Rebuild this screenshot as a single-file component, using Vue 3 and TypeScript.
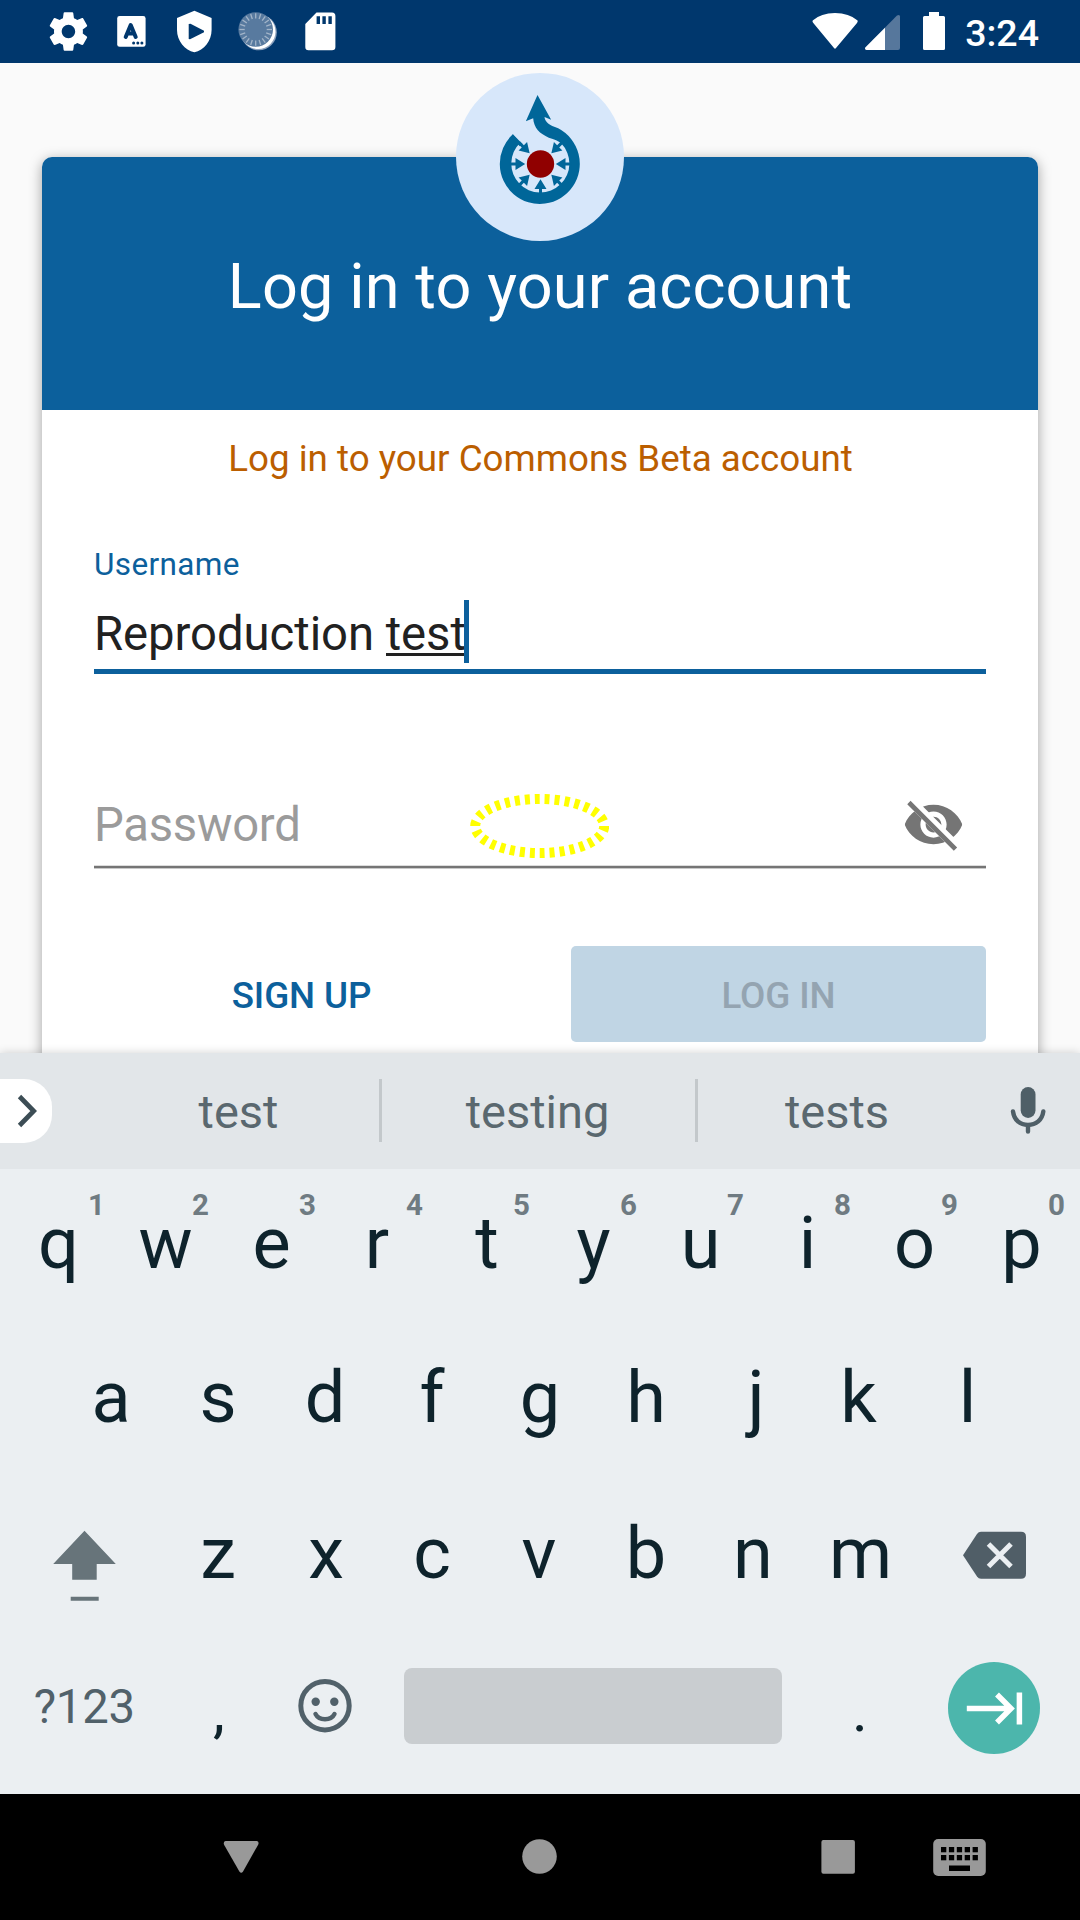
<script setup lang="ts">
import { ref } from 'vue'

interface Key {
  label: string
  hint?: string
  nudge: number
}

const username = ref({ done: 'Reproduction ', composing: 'test' })

// Optical corrections for glyphs that look off-centre on their key, in px
const nudges: Record<string, number> = { e: -1, r: -2.5, t: 0.5, j: 3, k: -1.5, x: 1, m: 0.5, g: 1, l: 0.5 }
const toKeys = (letters: string): Key[] => letters.split('').map((label) => ({ label, nudge: nudges[label] ?? 0 }))

const topRow: Key[] = toKeys('qwertyuiop').map((key, i) => ({ ...key, hint: String((i + 1) % 10) }))
const homeRow: Key[] = toKeys('asdfghjkl')
const bottomRow: Key[] = toKeys('zxcvbnm')

// Angles of the arrows that point at the centre of the Commons logo
const arrowAngles = [0, -45, -90, -135, 180, 45, 135]
const ticks = Array.from({ length: 20 }, (_, i) => i * 18)
const keyDots = [0, 1, 2, 3, 4]
</script>

<template>
  <div class="phone">
    <header class="status">
      <div class="notifications">
        <svg viewBox="0 0 63 63">
          <g transform="translate(45.5 8.4) scale(1.925) translate(-19.3 0)">
            <path fill="#fff" d="M19.43 12.98c.04-.32.07-.64.07-.98s-.03-.66-.07-.98l2.11-1.65c.19-.15.24-.42.12-.64l-2-3.46c-.12-.22-.39-.3-.61-.22l-2.49 1c-.52-.4-1.08-.73-1.69-.98l-.38-2.65C14.46 2.18 14.25 2 14 2h-4c-.25 0-.46.18-.49.42l-.38 2.65c-.61.25-1.17.59-1.69.98l-2.49-1c-.23-.09-.49 0-.61.22l-2 3.46c-.13.22-.07.49.12.64l2.11 1.65c-.04.32-.07.65-.07.98s.03.66.07.98l-2.11 1.65c-.19.15-.24.42-.12.64l2 3.46c.12.22.39.3.61.22l2.49-1c.52.4 1.08.73 1.69.98l.38 2.65c.03.24.24.42.49.42h4c.25 0 .46-.18.49-.42l.38-2.65c.61-.25 1.17-.59 1.69-.98l2.49 1c.23.09.49 0 .61-.22l2-3.46c.12-.22.07-.49-.12-.64l-2.11-1.65zM12 15.5c-1.93 0-3.5-1.57-3.5-3.5s1.57-3.5 3.5-3.5 3.5 1.57 3.5 3.5-1.57 3.5-3.5 3.5z" />
          </g>
        </svg>
        <svg viewBox="0 0 63 63">
          <rect x="17.2" y="16" width="28.4" height="30.8" rx="2.4" fill="#fff" />
          <path d="M26.3 37 L31.3 25 L36.3 37 M28 33.6 H34.6" transform="translate(-.6 0)" fill="none" stroke="#00376d" stroke-width="4" stroke-linecap="round" stroke-linejoin="round" />
          <circle cx="33.6" cy="43" r="1.5" fill="#00376d" />
          <circle cx="37.8" cy="43" r="1.5" fill="#00376d" />
          <circle cx="41.9" cy="43" r="1.5" fill="#00376d" />
        </svg>
        <svg viewBox="0 0 63 63">
          <path fill="#fff" fill-rule="evenodd" d="M31.4 10.8 L48.6 18 V30 C48.6 41 41 50 31.4 52.3 C21.8 50 14 41 14 30 V18 Z M25.7 24 V39 L27 39.2 L41 32.3 V30.7 L27.5 23.8 Z" />
        </svg>
        <svg viewBox="0 0 63 63">
          <circle cx="32.8" cy="32.3" r="18" fill="#8ba1bd" />
          <circle cx="32.2" cy="31.7" r="17.3" fill="#fff" />
          <circle cx="29.7" cy="29.5" r="17.3" fill="#587a9f" />
          <path v-for="t in ticks" :key="t" :transform="`rotate(${t} 29.7 29.5)`" d="M29.7 13.2 V18.5" stroke="#a3b5c9" stroke-width="1.3" />
        </svg>
        <svg viewBox="0 0 63 63">
          <path fill="#fff" fill-rule="evenodd" d="M27.5 12.5 H43 Q46.4 12.5 46.4 16 V47 Q46.4 50.3 43 50.3 H19.5 Q16.3 50.3 16.3 47 V24 Z M27.6 16.3 V24 H31 V16.3 Z M33.4 16.3 V24 H36.8 V16.3 Z M39.4 16.3 V24 H42.8 V16.3 Z" />
        </svg>
      </div>
      <div class="system">
        <svg width="46" height="63" viewBox="812 0 46 63">
          <path d="M812.7 20.5 Q821 13 835 13 Q849 13 857.6 20.5 Q858 21.5 857 23 L836 48 Q835 49.5 834 48 L813.3 23 Q812 21.5 812.7 20.5 Z" fill="#fff" />
        </svg>
        <svg class="signal" width="36" height="63" viewBox="865 0 36 63">
          <path d="M865.3 47.5 L897 15.5 Q900 14 900 16.5 V48 Q900 50 898 50 H866.5 Q864.5 49.5 865.3 47.5 Z" fill="#56779c" />
          <path d="M865.3 47.5 L885 27.7 V50 H866.5 Q864.5 49.5 865.3 47.5 Z" fill="#fff" />
        </svg>
        <svg class="battery" width="22" height="63" viewBox="923 0 22 63">
          <path d="M929 12 H939 V16 H943.5 Q945 16 945 17.5 V48.5 Q945 50 943.5 50 H924.5 Q923 50 923 48.5 V17.5 Q923 16 924.5 16 H929 Z" fill="#fff" />
        </svg>
        <span class="clock">3:24</span>
      </div>
    </header>

    <main class="screen">
      <section class="card">
        <svg class="logo" viewBox="0 0 168 168">
          <circle cx="84" cy="84" r="84" fill="#d7e7fa" />
          <g transform="translate(.5 0) scale(.33333) translate(-48 -38)">
            <g fill="#069">
              <path d="M217 222 A120 120 0 1 0 353 204 C326 194 314 186 312 170 L332 178 L291 104 L256 183 L278 174 C280 203 298 221 325 232 C342 237 354 241 362 249 A87 87 0 1 1 239 247 Z" />
              <path v-for="a in arrowAngles" :key="a" :transform="`rotate(${a} 300 311)`" d="M208 306.5 H225 V293 L254 311 L225 329 V315.5 H208 Z" />
              <path d="M217 222 L246 251 L238 258 L214 234 Z" />
            </g>
            <circle cx="300" cy="311" r="41" fill="#900000" />
          </g>
        </svg>
        <h1 class="title">Log in to your account</h1>
        <div class="form">
          <p class="subtitle">Log in to your Commons Beta account</p>
          <label class="caption">Username</label>
          <div class="value">
            <span class="typed">{{ username.done }}<span class="composing">{{ username.composing }}</span></span>
            <i class="caret"></i>
          </div>
          <div class="line active"></div>
          <div class="password">
            <span>Password</span>
            <svg class="focus-ring" viewBox="0 0 140 66">
              <ellipse cx="70.7" cy="33" rx="64.5" ry="27" fill="none" stroke="#ff0" stroke-width="10" pathLength="300" stroke-dasharray="5 5" />
            </svg>
            <svg class="eye" width="63" height="63" viewBox="0 0 24 24">
              <defs>
                <clipPath id="struck">
                  <path d="M2 4.27 L19.73 22 L22.27 19.46 L4.54 1.73 V1 H23 V23 H1 V4.27 Z" />
                </clipPath>
              </defs>
              <path clip-path="url(#struck)" fill="#757575" fill-rule="evenodd" d="M12 4.5C7 4.5 2.73 7.61 1 12c1.73 4.39 6 7.5 11 7.5s9.27-3.11 11-7.5c-1.73-4.39-6-7.5-11-7.5zM12 17c-2.76 0-5-2.24-5-5s2.24-5 5-5 5 2.24 5 5-2.24 5-5 5zM12 9c-1.66 0-3 1.34-3 3s1.34 3 3 3 3-1.34 3-3-1.34-3-3-3z" />
              <path d="M3.27 4.27 L19.74 20.74" stroke="#757575" stroke-width="1.8" stroke-linecap="square" />
            </svg>
          </div>
          <div class="line idle"></div>
          <div class="actions">
            <button class="btn">SIGN UP</button>
            <button class="btn disabled">LOG IN</button>
          </div>
        </div>
      </section>
    </main>

    <section class="keyboard">
      <div class="suggestions">
        <div class="expand">
          <svg width="52" height="66" viewBox="0 0 52 66">
            <path d="M19.5 18.5 L33.7 33 L19.5 47.5" fill="none" stroke="#3c4d55" stroke-width="4.7" />
          </svg>
        </div>
        <span class="word first">test</span>
        <span class="word second">testing</span>
        <span class="word third">tests</span>
        <svg class="mic" width="36" height="50" viewBox="0 0 36 50">
          <rect x="10.7" y="1" width="14.8" height="31" rx="7.4" fill="#4f5f67" />
          <path d="M3 25.5 C4 34 10 39 18 39 S32.2 34 33.3 25.5 M18 39 V45.5" fill="none" stroke="#4f5f67" stroke-width="4.4" stroke-linecap="round" />
        </svg>
      </div>

      <div class="keys">
        <div class="row top">
          <span v-for="k in topRow" :key="k.label" class="key">
            <span :style="{ transform: `translateX(${k.nudge}px)` }">{{ k.label }}</span>
            <b class="hint" :class="{ one: k.hint === '1' }">{{ k.hint }}</b>
          </span>
        </div>
        <div class="row">
          <span v-for="k in homeRow" :key="k.label" class="key">
            <span :style="{ transform: `translateX(${k.nudge}px)` }">{{ k.label }}</span>
          </span>
        </div>
        <div class="row lower">
          <span class="key wide">
            <svg width="63" height="100" viewBox="0 0 63 100">
              <path d="M31.5 28.7 L62.8 62 H43.7 V77.7 H19.2 V62 H.2 Z M17.7 94.7 H45.7 V98.7 H17.7 Z" fill="#67747a" />
            </svg>
          </span>
          <span v-for="k in bottomRow" :key="k.label" class="key">
            <span :style="{ transform: `translateX(${k.nudge}px)` }">{{ k.label }}</span>
          </span>
          <span class="key wide">
            <svg class="backspace" width="63" height="54" viewBox="0 0 63 54">
              <path d="M18 6.7 H58 Q63 6.7 63 11.7 V48.7 Q63 53.7 58 53.7 H18 Q15.5 53.7 14 51.5 L0 30.2 L14 8.9 Q15.5 6.7 18 6.7 Z" fill="#505e67" />
              <path d="M25.5 19 L48 41.5 M48 19 L25.5 41.5" stroke="#ebeff2" stroke-width="5" />
            </svg>
          </span>
        </div>
        <div class="row">
          <span class="key wide symbols">?123</span>
          <span class="key mark comma">,</span>
          <span class="key">
            <svg width="56" height="56" viewBox="0 0 56 56" fill="none" stroke="#51616a" stroke-width="5">
              <circle cx="28" cy="26.7" r="24.2" />
              <path d="M18.5 35 C22 42 34 42 37.5 35" stroke-width="4.4" stroke-linecap="round" />
              <circle cx="18.7" cy="22.7" r="4.2" fill="#51616a" stroke="none" />
              <circle cx="37.3" cy="22.7" r="4.2" fill="#51616a" stroke="none" />
            </svg>
          </span>
          <span class="key space"><i></i></span>
          <span class="key mark">.</span>
          <span class="key wide">
            <svg class="next" width="92" height="92" viewBox="0 0 92 92">
              <circle cx="46" cy="46" r="46" fill="#4cb6ac" />
              <path d="M18.8 46.5 H62 M49 32.5 L63 46.5 L49 60.5 M71.4 30.5 V62.5" fill="none" stroke="#fff" stroke-width="5.5" />
            </svg>
          </span>
        </div>
      </div>
    </section>

    <nav class="nav">
      <svg width="1080" height="126" viewBox="0 0 1080 126" fill="#999">
        <path d="M225.5 47 H257 Q259.5 48 258 51 L243 77.5 Q241.2 80 239.4 77.5 L224.2 51 Q222.8 48 225.5 47 Z" />
        <circle cx="539.5" cy="62.5" r="17.3" />
        <rect x="821.4" y="46" width="33.5" height="33.8" rx="2" />
        <rect x="933.2" y="45" width="52.6" height="37" rx="5" />
        <g fill="#000">
          <template v-for="d in keyDots" :key="d">
            <rect :x="941 + d * 7.9" y="53" width="5.3" height="5.3" />
            <rect :x="941 + d * 7.9" y="61" width="5.3" height="5.3" />
          </template>
          <rect x="949" y="71.5" width="21" height="5.5" />
        </g>
      </svg>
    </nav>
  </div>
</template>

<style>
body {
  margin: 0;
}
</style>

<style scoped>
.phone {
  display: flex;
  flex-direction: column;
  width: 1080px;
  height: 1920px;
  overflow: hidden;
  background: #fafafa;
  font-family: Roboto, "Liberation Sans", sans-serif;
}
svg {
  display: block;
  flex: none;
}
.status {
  display: flex;
  justify-content: space-between;
  height: 63px;
  padding: 0 41px 0 37px;
  background: #00376d;
}
.notifications {
  display: flex;
}
.notifications svg {
  width: 63px;
  height: 63px;
}
.system {
  display: flex;
}
.signal {
  margin-left: 7px;
}
.battery {
  margin-left: 22px;
}
.clock {
  margin-left: 20px;
  color: #fff;
  font-size: 37.5px;
  font-weight: 500;
  line-height: 66px;
}
.screen {
  height: 990px;
  padding: 94px 42px 0;
  box-sizing: border-box;
  overflow: hidden;
}
.card {
  position: relative;
  height: 1000px;
  border-radius: 10px;
  background: #fff;
  box-shadow: 0 3px 13px rgba(0, 0, 0, 0.36);
}
.logo {
  position: absolute;
  top: -84px;
  left: 414px;
  width: 168px;
  height: 168px;
}
.title {
  height: 253px;
  box-sizing: border-box;
  margin: 0;
  padding-top: 93px;
  border-radius: 10px 10px 0 0;
  background: #0c609c;
  color: #fff;
  font-size: 63px;
  font-weight: 400;
  letter-spacing: 0.13px;
  line-height: 74px;
  text-align: center;
}
.form {
  display: flex;
  flex-direction: column;
  padding: 27px 52px 0;
}
.subtitle {
  margin: 0;
  padding-left: 1px;
  color: #bb5e00;
  font-size: 36.75px;
  line-height: 44px;
  text-align: center;
}
.caption {
  margin-top: 65px;
  color: #0c609c;
  font-size: 31.5px;
  letter-spacing: 0.35px;
  line-height: 37px;
}
.value {
  display: flex;
  height: 63px;
  margin-top: 17px;
  color: #212121;
  font-size: 47.25px;
  letter-spacing: -0.05px;
}
.typed {
  line-height: 68px;
  white-space: pre;
}
.composing {
  display: inline-block;
  height: 56px;
  line-height: 68px;
  border-bottom: 3px solid #212121;
  box-sizing: border-box;
  vertical-align: top;
}
.caret {
  width: 5px;
  margin-left: -2px;
  background: #0c609c;
}
.line.active {
  height: 5px;
  margin-top: 6px;
  background: #0c609c;
}
.line.idle {
  height: 2px;
  margin-top: 9px;
  border-top: 1px solid #dcdcdc;
  border-bottom: 1px solid #c8c8c8;
  background: #757575;
}
.password {
  position: relative;
  display: flex;
  align-items: center;
  justify-content: space-between;
  height: 63px;
  margin-top: 119px;
  padding-right: 21px;
  color: #9b9b9b;
  font-size: 47.25px;
  letter-spacing: -0.27px;
}
.focus-ring {
  position: absolute;
  top: 0;
  left: 375px;
  width: 140px;
  height: 66px;
}
.actions {
  display: flex;
  gap: 62px;
  margin-top: 77px;
}
.btn {
  flex: 1;
  height: 96px;
  padding: 2px 0 0;
  border: 0;
  border-radius: 5px;
  background: none;
  color: #0c609c;
  font: 500 36.75px Roboto, sans-serif;
  letter-spacing: -0.13px;
}
.btn.disabled {
  background: #c0d5e4;
  color: #94a4b1;
}
.keyboard {
  position: relative;
  height: 741px;
  background: #ebeff2;
  box-shadow: 0 0 9px rgba(0, 0, 0, 0.18);
}
.suggestions {
  display: flex;
  align-items: center;
  height: 116px;
  background: #e2e6e9;
}
.expand {
  display: flex;
  align-items: center;
  width: 52px;
  height: 64px;
  margin-right: 44px;
  border-radius: 0 28px 28px 0;
  background: #fff;
}
.word {
  box-sizing: border-box;
  height: 63px;
  margin-bottom: 1px;
  color: #5a686f;
  font-size: 47px;
  line-height: 65px;
  text-align: center;
}
.first {
  width: 286px;
  padding-left: 2px;
  border-right: 3px solid #c3c8cb;
}
.second {
  width: 316px;
  padding-right: 2px;
  border-right: 3px solid #c3c8cb;
}
.third {
  width: 278px;
}
.mic {
  margin-left: 34px;
}
.keys {
  display: flex;
  flex-direction: column;
  height: 625px;
}
.row {
  display: flex;
  justify-content: center;
  box-sizing: border-box;
  height: 154.5px;
  padding-right: 2px;
}
.row.top {
  padding-right: 0;
}
.key {
  position: relative;
  display: flex;
  align-items: center;
  justify-content: center;
  box-sizing: border-box;
  flex: none;
  width: 107px;
  padding-bottom: 6px;
  color: #0e232c;
  font-size: 72px;
}
.lower .key:not(.wide) {
  padding-bottom: 4px;
}
.wide {
  width: 160.5px;
}
.symbols {
  color: #51616a;
  font-size: 47.25px;
  letter-spacing: -0.2px;
}
.mark {
  padding: 2px 0 0;
  font-size: 60px;
}
.comma {
  padding-left: 2px;
}
.space {
  width: 428px;
}
.space i {
  width: 378px;
  height: 76px;
  margin-bottom: 2px;
  border-radius: 8px;
  background: #c9cdd0;
}
.next {
  margin-top: 3px;
}
.backspace {
  margin-left: 1px;
}
.hint {
  position: absolute;
  top: 18px;
  right: 10px;
  color: #6f7b82;
  font-size: 29.5px;
  font-weight: 700;
  line-height: 36px;
}
.hint.one {
  right: 7px;
}
.nav {
  height: 126px;
  background: #000;
}
</style>
